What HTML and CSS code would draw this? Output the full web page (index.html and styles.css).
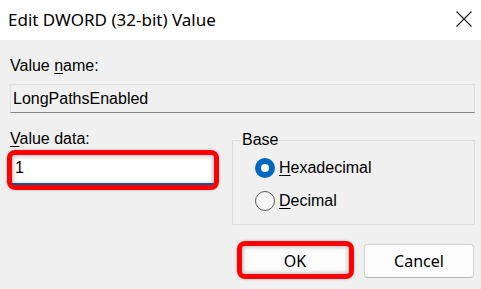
FILE: index.html
```html
<!DOCTYPE html>
<html lang="en">
<head>
<meta charset="utf-8">
<title>Edit DWORD (32-bit) Value</title>
<link rel="stylesheet" href="styles.css">
</head>
<body>
<div class="dialog">
  <header class="titlebar">
    <span class="title">Edit DWORD (32-bit) Value</span>
    <svg class="close" width="16" height="16" viewBox="0 0 16 16" aria-label="Close">
      <path d="M0.5 0.5 L15.5 15.5 M15.5 0.5 L0.5 15.5" stroke="#1a1a1a" stroke-width="1.1" fill="none"/>
    </svg>
  </header>
  <main class="content">
    <div class="label label-name">Value <u>n</u>ame:</div>
    <div class="namebox">LongPathsEnabled</div>
    <div class="row">
      <div class="col-data">
        <div class="label"><u>V</u>alue data:</div>
        <div class="input-wrap hl hl-input">
          <div class="input">1</div>
        </div>
      </div>
      <fieldset class="group">
        <legend class="legend">Base</legend>
        <label class="opt opt-first"><input type="radio" name="base" class="radio" checked><span><u>H</u>exadecimal</span></label>
        <label class="opt"><input type="radio" name="base" class="radio"><span><u>D</u>ecimal</span></label>
      </fieldset>
    </div>
    <div class="buttons">
      <button class="btn hl hl-btn">OK</button>
      <button class="btn">Cancel</button>
    </div>
  </main>
</div>
</body>
</html>
```
FILE: styles.css
```css
html, body {
  margin: 0;
  padding: 0;
}
body {
  width: 481px;
  height: 289px;
  background: #f0f0f0;
  overflow: hidden;
  font-family: "Liberation Sans", Arial, sans-serif;
  font-size: 16px;
  color: #000;
}
.dialog {
  display: flex;
  flex-direction: column;
  height: 289px;
}
.titlebar {
  height: 40px;
  background: #ffffff;
  display: flex;
  align-items: center;
  justify-content: space-between;
  padding: 0 9px 0 8px;
  box-sizing: border-box;
}
.title {
  font-family: "Noto Sans", "Open Sans", sans-serif;
  font-size: 17px;
  color: #000;
  line-height: 20px;
}
.close {
  display: block;
  margin-top: -3px;
}
.content {
  padding: 0 6px 0 10px;
  display: flex;
  flex-direction: column;
}
.label {
  line-height: 18px;
  height: 18px;
}
.label u {
  text-underline-offset: 2px;
}
.label-name {
  margin-top: 17px;
}
.namebox {
  margin-top: 9px;
  height: 29px;
  box-sizing: border-box;
  border: 1px solid #dedede;
  border-bottom-color: #868686;
  background: #f0f0f0;
  padding-left: 2px;
  line-height: 27px;
}
.row {
  display: flex;
  gap: 16px;
  margin-top: 17px;
  align-items: flex-start;
}
.col-data {
  width: 206px;
  display: flex;
  flex-direction: column;
}
.input-wrap {
  margin-top: 4px;
  position: relative;
}
.input {
  height: 33px;
  box-sizing: border-box;
  background: #ffffff;
  border: 1px solid #e5e5e5;
  border-bottom: 2px solid #0067c0;
  padding-left: 4px;
  line-height: 30px;
}
.hl::after {
  content: "";
  position: absolute;
  border: 5px solid #ff0000;
  border-radius: 8px;
  box-shadow: inset 0 0 4px 1px rgba(0, 0, 0, 0.28), 0 0 3px rgba(0, 0, 0, 0.25);
  pointer-events: none;
}
.hl-input::after {
  top: -2px;
  bottom: -5px;
  left: -3px;
  right: -3px;
}
.group {
  flex: 1;
  margin: 1px 0 0 0;
  padding: 9px 0 13px 22px;
  border: 1px solid #dcdcdc;
  min-width: 0;
  display: flex;
  flex-direction: column;
  gap: 13px;
}
.legend {
  padding: 0 1px;
  margin-left: -14px;
  line-height: 18px;
}
.opt {
  display: flex;
  align-items: center;
  height: 20px;
  gap: 4px;
}
.opt u {
  text-underline-offset: 2px;
}
.radio {
  appearance: none;
  -webkit-appearance: none;
  margin: 0;
  width: 20px;
  height: 20px;
  border-radius: 50%;
  box-sizing: border-box;
  border: 1px solid #5c5c5c;
  background: #f7f7f7;
  position: relative;
  flex: none;
}
.radio:checked {
  border: none;
  background: #0067c0;
}
.radio:checked::after {
  content: "";
  position: absolute;
  left: 6px;
  top: 6px;
  width: 8px;
  height: 8px;
  border-radius: 50%;
  background: #ffffff;
}
.buttons {
  display: flex;
  justify-content: flex-end;
  gap: 14px;
  margin-top: 19px;
  padding-right: 1px;
}
.btn {
  position: relative;
  width: 110px;
  height: 34px;
  box-sizing: border-box;
  background: #fdfdfd;
  border: 1px solid #d0d0d0;
  border-bottom-color: #b8b8b8;
  border-radius: 4px;
  font-family: "Noto Sans", "Open Sans", sans-serif;
  font-size: 16px;
  color: #000;
  padding: 0;
}
.hl-btn::after {
  top: -4px;
  bottom: -2px;
  left: -4px;
  right: -5px;
}
```
